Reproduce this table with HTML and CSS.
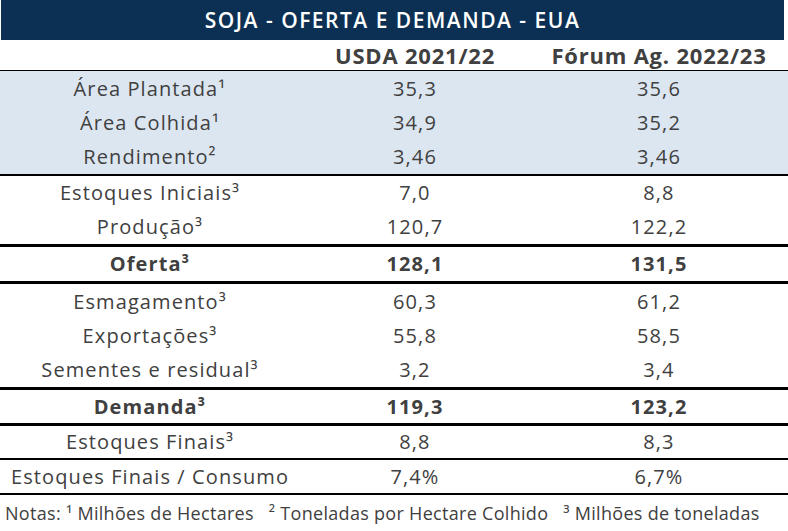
FILE: index.html
```html
<!DOCTYPE html>
<html lang="pt-BR">
<head>
<meta charset="utf-8">
<title>Soja - Oferta e Demanda - EUA</title>
<link rel="stylesheet" href="styles.css">
</head>
<body>
<div class="sheet">
  <div class="title">SOJA - OFERTA E DEMANDA - EUA</div>
  <div class="row colhead">
    <div></div><div>USDA 2021/22</div><div>Fórum Ag. 2022/23</div>
  </div>
  <div class="band">
    <div class="row rb"><div>Área Plantada¹</div><div>35,3</div><div>35,6</div></div>
    <div class="row rb"><div>Área Colhida¹</div><div>34,9</div><div>35,2</div></div>
    <div class="row rb"><div>Rendimento²</div><div>3,46</div><div>3,46</div></div>
  </div>
  <div class="row r34"><div>Estoques Iniciais³</div><div>7,0</div><div>8,8</div></div>
  <div class="row r34"><div>Produção³</div><div>120,7</div><div>122,2</div></div>
  <div class="row r34 thick bold"><div>Oferta³</div><div>128,1</div><div>131,5</div></div>
  <div class="row rb thick"><div>Esmagamento³</div><div>60,3</div><div>61,2</div></div>
  <div class="row rb"><div>Exportações³</div><div>55,8</div><div>58,5</div></div>
  <div class="row rb"><div>Sementes e residual³</div><div>3,2</div><div>3,4</div></div>
  <div class="row r33 thick bold"><div>Demanda³</div><div>119,3</div><div>123,2</div></div>
  <div class="row r32 thick"><div>Estoques Finais³</div><div>8,8</div><div>8,3</div></div>
  <div class="row r33 thin"><div>Estoques Finais / Consumo</div><div>7,4%</div><div>6,7%</div></div>
  <div class="notes thin">Notas: ¹ Milhões de Hectares&nbsp;&nbsp; ² Toneladas por Hectare Colhido&nbsp;&nbsp; ³ Milhões de toneladas</div>
</div>
</body>
</html>
```
FILE: styles.css
```css
html, body {
  margin: 0;
  padding: 0;
  background: #ffffff;
}
.sheet {
  width: 788px;
  font-family: "Open Sans", "DejaVu Sans", sans-serif;
  color: #404040;
  font-size: 20px;
  letter-spacing: 1.1px;
}
.title {
  height: 40px;
  margin: 0 4px 0 1px;
  background: #0b3054;
  color: #ffffff;
  font-size: 21px;
  font-weight: 600;
  letter-spacing: 1.5px;
  display: flex;
  align-items: center;
  justify-content: center;
}
.row {
  display: grid;
  grid-template-columns: 300px 230px 258px;
  align-items: center;
  text-align: center;
  box-sizing: content-box;
}
.colhead {
  height: 30px;
  font-size: 22px;
  font-weight: 700;
  letter-spacing: 0.8px;
  border-bottom: 1px solid #000;
}
.band {
  background: #dce6f1;
  border-bottom: 2px solid #000;
}
.rb { height: 34.33px; }
.r34 { height: 34px; }
.r33 { height: 33px; }
.r32 { height: 32px; }
.thick { border-top: 3px solid #000; }
.thin { border-top: 2px solid #000; }
.bold { font-weight: 700; }
.notes {
  height: 36px;
  display: flex;
  align-items: center;
  padding-left: 5px;
  font-size: 18px;
  letter-spacing: 0.3px;
  white-space: nowrap;
}
```
